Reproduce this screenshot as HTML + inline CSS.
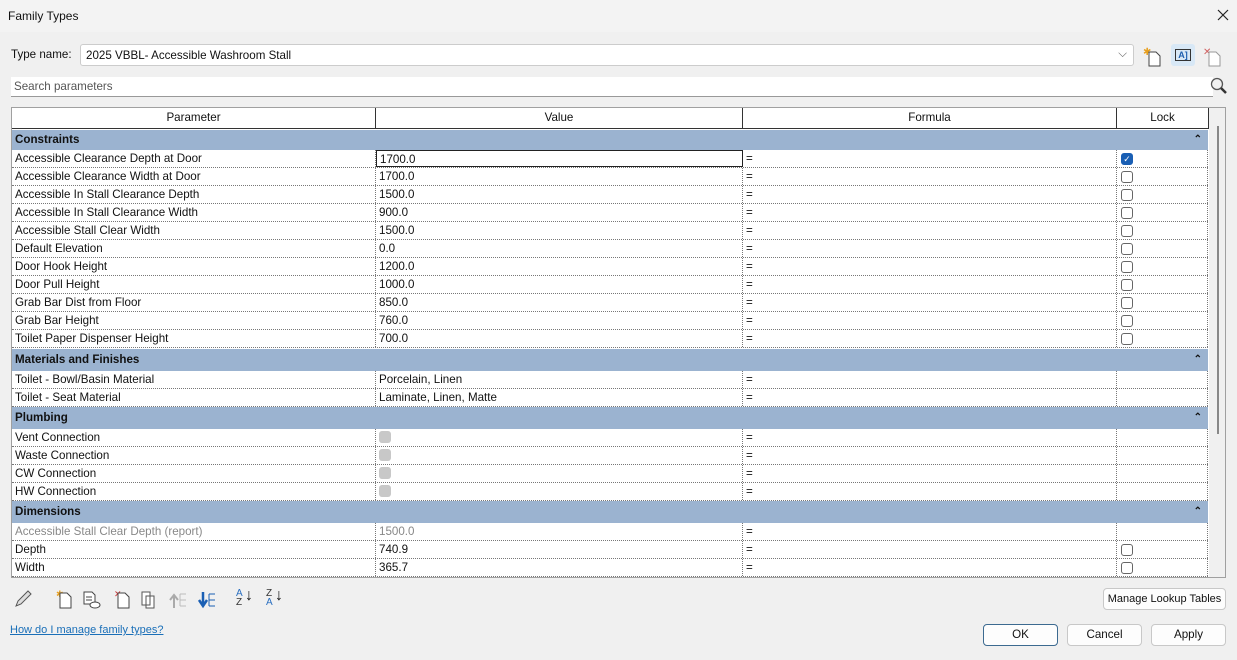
<!DOCTYPE html>
<html><head><meta charset="utf-8"><style>
*{box-sizing:border-box;margin:0;padding:0}
body{width:1237px;height:660px;background:#f0f0f0;font-family:"Liberation Sans",sans-serif;font-size:11.6px;color:#111;position:relative;overflow:hidden}
.a{position:absolute}
.title{left:0;top:0;width:1237px;height:32px;background:#f3f3f3}
.tbl{left:11px;top:107px;width:1215px;height:471px;border:1px solid #a0a0a0;background:#fff;overflow:hidden}
.hdr{position:absolute;top:0;height:21px;border-right:1px solid #333;border-bottom:1px solid #333;text-align:center;line-height:20px;background:#fff}
.g{position:absolute;left:0;width:1196px;height:22px;background:#9bb3d0;font-weight:bold;line-height:22px;padding-left:3px}
.g span{position:absolute;right:6px;top:0;font-size:10px}
.r{position:absolute;left:0;width:1196px;height:18px;border-bottom:1px dotted #777;line-height:17px}
.r div{position:absolute;top:0;height:17px;padding-left:3px;border-right:1px dotted #777}
.c1{left:0;width:364px}.c2{left:364px;width:367px}.c3{left:731px;width:374px}.c4{left:1105px;width:91px;border-right:1px dotted #777}
.cb{position:absolute;left:4px;top:3px;width:12px;height:12px;border:1px solid #666;border-radius:3px;background:#fff}
.gc{position:absolute;left:3px;top:2px;width:12px;height:12px;border-radius:3px;background:#c8c8c8}
.btn{position:absolute;height:22px;border:1px solid #c8c8c8;border-radius:4px;background:#fdfdfd;text-align:center;line-height:20px;white-space:nowrap}
.gray{color:#888}
</style></head><body>
<div class="a title"></div>
<div class="a" style="left:8px;top:9px;font-size:12px">Family Types</div>
<svg class="a" style="left:1217px;top:9px" width="12" height="12"><path d="M1 1L11 11M11 1L1 11" stroke="#222" stroke-width="1.2"/></svg>
<div class="a" style="left:11px;top:48px">Type name:</div>
<div class="a" style="left:80px;top:44px;width:1054px;height:22px;background:#fff;border:1px solid #ccc;border-radius:3px;padding:4px 5px">2025 VBBL- Accessible Washroom Stall<span style="position:absolute;right:6px;top:2px;color:#666">⌵</span></div>
<svg class="a" style="left:1143px;top:45px" width="20" height="22"><text x="0" y="10" fill="#e8a020" font-size="10">✱</text><path d="M6 7h7l4 4v10H6z" fill="#fff" stroke="#444"/></svg>
<div class="a" style="left:1171px;top:44px;width:24px;height:22px;background:#d8e8f6;border-radius:3px"><div class="a" style="left:4px;top:5px;width:16px;height:12px;border:1px solid #333;font-size:9px;font-weight:bold;color:#2060b0;text-align:center;line-height:10px">A]</div></div>
<svg class="a" style="left:1203px;top:45px" width="20" height="22"><text x="0" y="10" fill="#d06060" font-size="10">✕</text><path d="M6 7h7l4 4v10H6z" fill="#fff" stroke="#999"/></svg>
<div class="a" style="left:11px;top:77px;width:1202px;height:20px;background:#fff;border-bottom:1px solid #999;padding:3px 3px;color:#555">Search parameters</div>
<svg class="a" style="left:1210px;top:77px" width="18" height="18"><circle cx="7" cy="7" r="5.5" fill="none" stroke="#555" stroke-width="1.3"/><path d="M11 11l5 5" stroke="#333" stroke-width="2.5"/></svg>
<div class="a tbl">
<div class="hdr" style="left:0;width:364px">Parameter</div>
<div class="hdr" style="left:364px;width:367px">Value</div>
<div class="hdr" style="left:731px;width:374px">Formula</div>
<div class="hdr" style="left:1105px;width:92px">Lock</div>
<div class="a" style="left:1197px;top:0;width:16px;height:470px;background:#f0f0f0"></div>
<div class="a" style="left:1205px;top:18px;width:2px;height:308px;background:#888"></div>
<div class="g" style="top:22px;height:20px;line-height:20px">Constraints<span>⌃</span></div>
<div class="r" style="top:42px"><div class="c1">Accessible Clearance Depth at Door</div><div class="c2" style="border:1px solid #222">1700.0</div><div class="c3">=</div><div class="c4"><span class="cb" style="background:#1a5fb4;border-color:#1a5fb4;color:#fff;font-size:9px;line-height:10px;text-align:center">✓</span></div></div>
<div class="r" style="top:60px"><div class="c1">Accessible Clearance Width at Door</div><div class="c2">1700.0</div><div class="c3">=</div><div class="c4"><span class="cb"></span></div></div>
<div class="r" style="top:78px"><div class="c1">Accessible In Stall Clearance Depth</div><div class="c2">1500.0</div><div class="c3">=</div><div class="c4"><span class="cb"></span></div></div>
<div class="r" style="top:96px"><div class="c1">Accessible In Stall Clearance Width</div><div class="c2">900.0</div><div class="c3">=</div><div class="c4"><span class="cb"></span></div></div>
<div class="r" style="top:114px"><div class="c1">Accessible Stall Clear Width</div><div class="c2">1500.0</div><div class="c3">=</div><div class="c4"><span class="cb"></span></div></div>
<div class="r" style="top:132px"><div class="c1">Default Elevation</div><div class="c2">0.0</div><div class="c3">=</div><div class="c4"><span class="cb"></span></div></div>
<div class="r" style="top:150px"><div class="c1">Door Hook Height</div><div class="c2">1200.0</div><div class="c3">=</div><div class="c4"><span class="cb"></span></div></div>
<div class="r" style="top:168px"><div class="c1">Door Pull Height</div><div class="c2">1000.0</div><div class="c3">=</div><div class="c4"><span class="cb"></span></div></div>
<div class="r" style="top:186px"><div class="c1">Grab Bar Dist from Floor</div><div class="c2">850.0</div><div class="c3">=</div><div class="c4"><span class="cb"></span></div></div>
<div class="r" style="top:204px"><div class="c1">Grab Bar Height</div><div class="c2">760.0</div><div class="c3">=</div><div class="c4"><span class="cb"></span></div></div>
<div class="r" style="top:222px"><div class="c1">Toilet Paper Dispenser Height</div><div class="c2">700.0</div><div class="c3">=</div><div class="c4"><span class="cb"></span></div></div>
<div class="g" style="top:241px">Materials and Finishes<span>⌃</span></div>
<div class="r" style="top:263px"><div class="c1">Toilet - Bowl/Basin Material</div><div class="c2">Porcelain, Linen</div><div class="c3">=</div><div class="c4"></div></div>
<div class="r" style="top:281px"><div class="c1">Toilet - Seat Material</div><div class="c2">Laminate, Linen, Matte</div><div class="c3">=</div><div class="c4"></div></div>
<div class="g" style="top:299px">Plumbing<span>⌃</span></div>
<div class="r" style="top:321px"><div class="c1">Vent Connection</div><div class="c2"><span class="gc"></span></div><div class="c3">=</div><div class="c4"></div></div>
<div class="r" style="top:339px"><div class="c1">Waste Connection</div><div class="c2"><span class="gc"></span></div><div class="c3">=</div><div class="c4"></div></div>
<div class="r" style="top:357px"><div class="c1">CW Connection</div><div class="c2"><span class="gc"></span></div><div class="c3">=</div><div class="c4"></div></div>
<div class="r" style="top:375px"><div class="c1">HW Connection</div><div class="c2"><span class="gc"></span></div><div class="c3">=</div><div class="c4"></div></div>
<div class="g" style="top:393px">Dimensions<span>⌃</span></div>
<div class="r" style="top:415px"><div class="c1 gray">Accessible Stall Clear Depth (report)</div><div class="c2 gray">1500.0</div><div class="c3">=</div><div class="c4"></div></div>
<div class="r" style="top:433px"><div class="c1">Depth</div><div class="c2">740.9</div><div class="c3">=</div><div class="c4"><span class="cb"></span></div></div>
<div class="r" style="top:451px"><div class="c1">Width</div><div class="c2">365.7</div><div class="c3">=</div><div class="c4"><span class="cb"></span></div></div>
</div>
<svg class="a" style="left:12px;top:588px" width="285" height="22">
<path d="M4 18l2-5 10-10 3 3-10 10z" fill="#ddd" stroke="#555"/>
<text x="44" y="9" fill="#e8a020" font-size="9">✱</text><path d="M48 5h7l4 4v11H48z" fill="#fff" stroke="#444"/>
<path d="M72 4h8l3 3v9H72z" fill="#fff" stroke="#444"/><path d="M74 9h6M74 12h6" stroke="#444"/><ellipse cx="83" cy="17" rx="5" ry="3" fill="#fff" stroke="#444"/>
<text x="102" y="9" fill="#c33" font-size="9">✕</text><path d="M106 5h7l4 4v11h-11z" fill="#fff" stroke="#444"/>
<path d="M130 4h8v13h-8z M134 8h8l0 12h-8z" fill="#fff" stroke="#555"/>
<path d="M162 20V8M158 12l4-5 4 5" stroke="#aaa" stroke-width="2" fill="none"/><path d="M168 6h6M168 12h6M168 18h6M168 6v12" stroke="#bbb" fill="none"/>
<path d="M191 4v12M187 12l4 6 4-6" stroke="#1a5fb4" stroke-width="2.5" fill="none"/><path d="M197 6h6M197 12h6M197 18h6M197 6v12" stroke="#1a5fb4" fill="none"/>
</svg>
<div class="a" style="left:236px;top:589px;font-size:10px;line-height:9px;color:#2a6fc0">A<br><span style="color:#333">Z</span></div><div class="a" style="left:245px;top:587px;font-size:16px">↓</div>
<div class="a" style="left:266px;top:589px;font-size:10px;line-height:9px;color:#333">Z<br><span style="color:#2a6fc0">A</span></div><div class="a" style="left:275px;top:587px;font-size:16px">↓</div>
<div class="a" style="left:10px;top:624px;color:#1a6fb8;text-decoration:underline;font-size:11px">How do I manage family types?</div>
<div class="btn" style="left:1103px;top:588px;width:123px;font-size:11px">Manage Lookup Tables</div>
<div class="btn" style="left:983px;top:624px;width:75px;border-color:#3c6a90">OK</div>
<div class="btn" style="left:1067px;top:624px;width:75px">Cancel</div>
<div class="btn" style="left:1151px;top:624px;width:75px">Apply</div>
</body></html>
